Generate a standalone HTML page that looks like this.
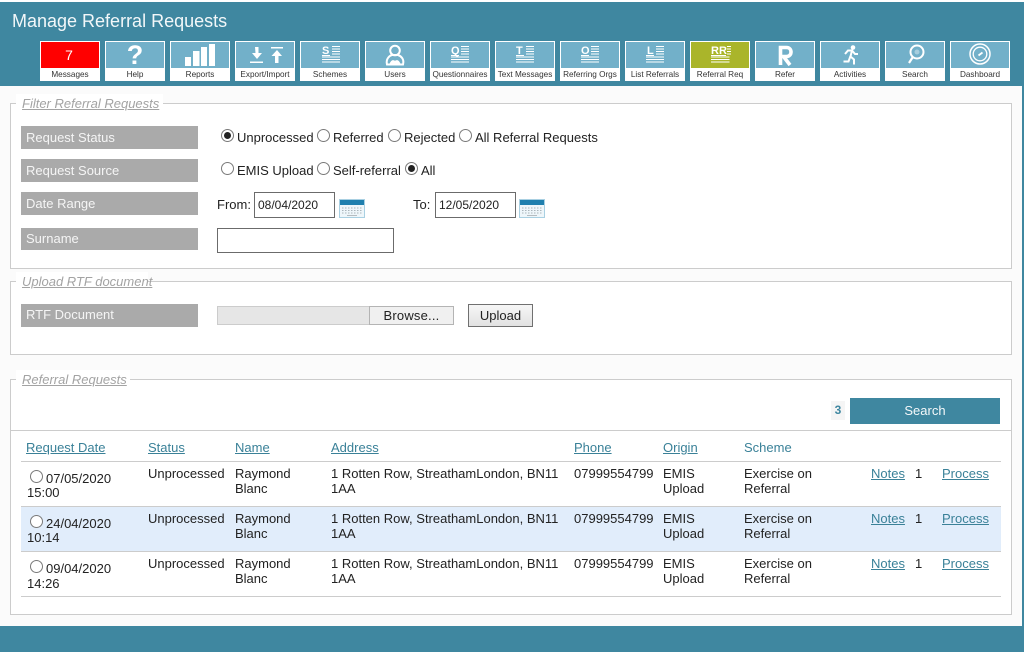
<!DOCTYPE html>
<html><head><meta charset="utf-8"><title>Manage Referral Requests</title>
<style>
html,body{margin:0;padding:0;width:1025px;height:652px;overflow:hidden;background:#fff}
body{position:relative;font-family:"Liberation Sans",Arial,sans-serif;font-size:13px;color:#222}
.a,.t,.l,.r,.lg,.tile,.tile b,.fs{position:absolute}
.t{white-space:nowrap;line-height:16px;height:16px}
.bg{position:absolute;left:0;top:2px;width:1024px;height:650px;background:#3f87a0}
.panel{position:absolute;left:0;top:86px;width:1022px;height:540px;background:#fbfbfb}
h1{position:absolute;left:12px;top:10px;margin:0;font-size:18px;font-weight:normal;line-height:22px;color:#f2f7f9}
.tile{top:41px;width:60px;height:40px;background:#fff}
.tile i{position:absolute;left:1px;top:1px;width:58px;height:26px;background:#72b0c9;display:block}
.tile b{left:-4px;width:68px;top:28px;text-align:center;font-weight:normal;font-size:8.2px;line-height:11px;color:#333}
.fs{left:10px;width:1000px;border:1px solid #ccc;background:#fff}
.lg{left:16px;background:#fff;height:20px;line-height:20px;font-style:italic;font-size:13px;color:#a3a3a3;white-space:nowrap}
.lg span{margin-left:6px;text-decoration:underline}
.l{left:21px;width:177px;background:#aaa;color:#f5f5f5;padding-left:5px;box-sizing:border-box;font-size:13px}
.r{width:11px;height:11px;border:1px solid #7a7a7a;border-radius:50%;background:#fff}
.r.on:after{content:"";position:absolute;left:2px;top:2px;width:7px;height:7px;border-radius:50%;background:#222}
.in{position:absolute;box-sizing:border-box;border:1px solid #6b6b6b;background:#fff;padding-left:3px;font-size:12px;color:#222}
.h{color:#3a8198;text-decoration:underline}
.ln{position:absolute;left:21px;width:980px;height:1px;background:#ccc}
</style></head><body>
<div class="bg"></div>
<h1>Manage Referral Requests</h1>

<div class="tile" style="left:40px"><i style="background:#f00"></i><b>Messages</b></div>
<div class="tile" style="left:105px"><i></i><b>Help</b></div>
<div class="tile" style="left:170px"><i></i><b>Reports</b></div>
<div class="tile" style="left:235px"><i></i><b>Export/Import</b></div>
<div class="tile" style="left:300px"><i></i><b>Schemes</b></div>
<div class="tile" style="left:365px"><i></i><b>Users</b></div>
<div class="tile" style="left:430px"><i></i><b>Questionnaires</b></div>
<div class="tile" style="left:495px"><i></i><b>Text Messages</b></div>
<div class="tile" style="left:560px"><i></i><b>Referring Orgs</b></div>
<div class="tile" style="left:625px"><i></i><b>List Referrals</b></div>
<div class="tile" style="left:690px"><i style="background:#aab52a"></i><b>Referral Req</b></div>
<div class="tile" style="left:755px"><i></i><b>Refer</b></div>
<div class="tile" style="left:820px"><i></i><b>Activities</b></div>
<div class="tile" style="left:885px"><i></i><b>Search</b></div>
<div class="tile" style="left:950px"><i></i><b>Dashboard</b></div>

<svg class="a" style="left:0;top:0;z-index:2" width="1025" height="86" viewBox="0 0 1025 86" fill="#fff" font-family="Liberation Sans,sans-serif">
<text x="69" y="60" font-size="14" text-anchor="middle">7</text>
<text x="135" y="64" font-size="27" font-weight="bold" text-anchor="middle">?</text>
<rect x="185" y="57" width="6" height="9"/><rect x="193" y="51" width="6.500" height="15"/><rect x="201" y="47" width="6" height="19"/><rect x="209" y="44" width="6" height="22"/>
<path d="M255 47h3.500v6h3.500l-5 6-5-6h3.500zM250 61.500h13v1.500h-13zM271 47h12v1.500h-12zM277 50l5 6h-3.500v7h-3.500v-7h-3.500z"/>
<text x="322" y="54" font-size="11" font-weight="bold">S</text><rect x="322" y="55" width="8" height="1"/><path d="M332 46.500h8M332 49h8M332 51.500h8M332 54h8M322 57h18M322 59.500h18M322 62h18" stroke="#fff" stroke-width="1" fill="none"/>
<circle cx="395" cy="50.500" r="4.800" fill="none" stroke="#fff" stroke-width="2"/>
<path d="M387 64.500c-1.500-6 3-9 5-9.500h6c3 1 6.500 4 5 9.500zM391 63c1-2 2-2.500 4-1 2-1.500 3-1 4 1z" fill="none" stroke="#fff" stroke-width="2"/>
<text x="451" y="54" font-size="11" font-weight="bold">Q</text><rect x="451" y="55" width="8" height="1"/><path d="M461 46.500h8M461 49h8M461 51.500h8M461 54h8M451 57h18M451 59.500h18M451 62h18" stroke="#fff" fill="none"/>
<text x="516" y="54" font-size="11" font-weight="bold">T</text><rect x="516" y="55" width="8" height="1"/><path d="M526 46.500h8M526 49h8M526 51.500h8M526 54h8M516 57h18M516 59.500h18M516 62h18" stroke="#fff" fill="none"/>
<text x="581" y="54" font-size="11" font-weight="bold">O</text><rect x="581" y="55" width="8" height="1"/><path d="M591 46.500h8M591 49h8M591 51.500h8M591 54h8M581 57h18M581 59.500h18M581 62h18" stroke="#fff" fill="none"/>
<text x="647" y="54" font-size="11" font-weight="bold">L</text><rect x="646" y="55" width="8" height="1"/><path d="M656 46.500h8M656 49h8M656 51.500h8M656 54h8M646 57h18M646 59.500h18M646 62h18" stroke="#fff" fill="none"/>
<text x="711" y="54" font-size="11" font-weight="bold">RR</text><rect x="711" y="55" width="15" height="1"/><path d="M727 46.500h4M727 49h4M727 51.500h4M727 54h4M711 57h18.500M711 59.500h18.500M711 62h18.500" stroke="#fff" fill="none"/>
<path d="M780.500 65V47.500h6c6 0 6 9 0 9h-3l6.500 8.500" fill="none" stroke="#fff" stroke-width="3.600"/>
<circle cx="853" cy="47.500" r="2.300"/>
<path d="M845 54l3-3.500h4l-1.500 6 3.500 3 0 5M850.500 56l-2 5.500h-5M852.500 51l2.500 3h3" fill="none" stroke="#fff" stroke-width="2"/>
<circle cx="917" cy="52" r="6.500" fill="none" stroke="#fff" stroke-width="2"/><circle cx="917" cy="52" r="2.500" fill="#a6cede"/>
<path d="M912.500 57.500l-3.500 5.500" fill="none" stroke="#fff" stroke-width="2.200"/>
<circle cx="980" cy="54" r="10" fill="none" stroke="#fff" stroke-width="1.500"/><circle cx="980" cy="54" r="6.800" fill="none" stroke="#fff" stroke-width="1.300"/>
<path d="M978.500 55.500l4-3" fill="none" stroke="#fff" stroke-width="1.800"/>
</svg>

<div class="panel"></div>

<div class="fs" style="top:103px;height:164px"></div>
<div class="lg" style="top:94px;width:147px"><span>Filter Referral Requests</span></div>
<div class="l" style="top:126px;height:23px;line-height:23px">Request Status</div>
<div class="l" style="top:159px;height:23px;line-height:23px">Request Source</div>
<div class="l" style="top:192px;height:23px;line-height:23px">Date Range</div>
<div class="l" style="top:228px;height:22px;line-height:21px">Surname</div>

<div class="r on" style="left:221px;top:129px"></div><div class="t" style="left:237px;top:130px">Unprocessed</div>
<div class="r" style="left:317px;top:129px"></div><div class="t" style="left:333px;top:130px">Referred</div>
<div class="r" style="left:388px;top:129px"></div><div class="t" style="left:404px;top:130px">Rejected</div>
<div class="r" style="left:459px;top:129px"></div><div class="t" style="left:475px;top:130px">All Referral Requests</div>

<div class="r" style="left:221px;top:162px"></div><div class="t" style="left:237px;top:163px">EMIS Upload</div>
<div class="r" style="left:317px;top:162px"></div><div class="t" style="left:333px;top:163px">Self-referral</div>
<div class="r on" style="left:405px;top:162px"></div><div class="t" style="left:421px;top:163px">All</div>

<div class="t" style="left:217px;top:197px">From:</div>
<div class="in" style="left:254px;top:192px;width:81px;height:26px;line-height:24px">08/04/2020</div>
<div class="t" style="left:413px;top:197px">To:</div>
<div class="in" style="left:435px;top:192px;width:81px;height:26px;line-height:24px">12/05/2020</div>
<svg class="a" style="left:339px;top:199px" width="26" height="19" viewBox="0 0 26 19"><rect x=".5" y=".5" width="25" height="18" fill="#eef6fa" stroke="#a9d0e2"/><rect x="1" y="1" width="24" height="5" fill="#1f7fae"/><path d="M3 9h20M3 11.500h20M3 14h20" stroke="#aab4ba" stroke-dasharray="1.500 1.500"/><path d="M8 16.500h10" stroke="#b5bcc0"/></svg>
<svg class="a" style="left:519px;top:199px" width="26" height="19" viewBox="0 0 26 19"><rect x=".5" y=".5" width="25" height="18" fill="#eef6fa" stroke="#a9d0e2"/><rect x="1" y="1" width="24" height="5" fill="#1f7fae"/><path d="M3 9h20M3 11.500h20M3 14h20" stroke="#aab4ba" stroke-dasharray="1.500 1.500"/><path d="M8 16.500h10" stroke="#b5bcc0"/></svg>
<div class="in" style="left:217px;top:228px;width:177px;height:25px"></div>

<div class="fs" style="top:281px;height:72px"></div>
<div class="lg" style="top:272px;width:132px"><span>Upload RTF document</span></div>
<div class="l" style="top:304px;height:23px;line-height:21px">RTF Document</div>
<div class="a" style="left:217px;top:306px;width:152px;height:17px;background:#e6e6e6;border:1px solid #ccc;border-right:0"></div>
<div class="a" style="left:369px;top:306px;width:83px;height:17px;background:#f0f0f0;border:1px solid #b4b4b4;text-align:center;line-height:17px;letter-spacing:.2px">Browse...</div>
<div class="a" style="left:468px;top:304px;width:63px;height:21px;background:linear-gradient(#f6f6f6,#e2e2e2);border:1px solid #707070;text-align:center;line-height:22px">Upload</div>

<div class="fs" style="top:379px;height:234px"></div>
<div class="lg" style="top:370px;width:114px"><span>Referral Requests</span></div>
<div class="a" style="left:831px;top:401px;width:14px;height:19px;background:#f5f5f5;color:#3f87a0;font-weight:bold;font-size:12px;line-height:19px;text-align:center">3</div>
<div class="a" style="left:850px;top:398px;width:150px;height:26px;background:#3f87a0;color:#f4f8fa;text-align:center;line-height:25px">Search</div>
<div class="a" style="left:11px;top:430px;width:1000px;height:1px;background:#ccc"></div>

<div class="t h" style="left:26px;top:440px">Request Date</div>
<div class="t h" style="left:148px;top:440px">Status</div>
<div class="t h" style="left:235px;top:440px">Name</div>
<div class="t h" style="left:331px;top:440px">Address</div>
<div class="t h" style="left:574px;top:440px">Phone</div>
<div class="t h" style="left:663px;top:440px">Origin</div>
<div class="t" style="left:744px;top:440px;color:#3a8198">Scheme</div>

<div class="a" style="left:21px;top:507px;width:980px;height:44px;background:#e1edfb"></div>
<div class="ln" style="top:461px"></div>
<div class="ln" style="top:506px"></div>
<div class="ln" style="top:551px"></div>
<div class="ln" style="top:596px"></div>

<div class="r" style="left:30px;top:470px"></div>
<div class="t" style="left:46px;top:471px">07/05/2020</div><div class="t" style="left:27px;top:485px">15:00</div>
<div class="t" style="left:148px;top:466px">Unprocessed</div>
<div class="t" style="left:235px;top:466px">Raymond</div><div class="t" style="left:235px;top:481px">Blanc</div>
<div class="t" style="left:331px;top:466px">1 Rotten Row, StreathamLondon, BN11</div><div class="t" style="left:331px;top:481px">1AA</div>
<div class="t" style="left:574px;top:466px">07999554799</div>
<div class="t" style="left:663px;top:466px">EMIS</div><div class="t" style="left:663px;top:481px">Upload</div>
<div class="t" style="left:744px;top:466px">Exercise on</div><div class="t" style="left:744px;top:481px">Referral</div>
<div class="t h" style="left:871px;top:466px">Notes</div><div class="t" style="left:915px;top:466px">1</div><div class="t h" style="left:942px;top:466px">Process</div>

<div class="r" style="left:30px;top:515px"></div>
<div class="t" style="left:46px;top:516px">24/04/2020</div><div class="t" style="left:27px;top:530px">10:14</div>
<div class="t" style="left:148px;top:511px">Unprocessed</div>
<div class="t" style="left:235px;top:511px">Raymond</div><div class="t" style="left:235px;top:526px">Blanc</div>
<div class="t" style="left:331px;top:511px">1 Rotten Row, StreathamLondon, BN11</div><div class="t" style="left:331px;top:526px">1AA</div>
<div class="t" style="left:574px;top:511px">07999554799</div>
<div class="t" style="left:663px;top:511px">EMIS</div><div class="t" style="left:663px;top:526px">Upload</div>
<div class="t" style="left:744px;top:511px">Exercise on</div><div class="t" style="left:744px;top:526px">Referral</div>
<div class="t h" style="left:871px;top:511px">Notes</div><div class="t" style="left:915px;top:511px">1</div><div class="t h" style="left:942px;top:511px">Process</div>

<div class="r" style="left:30px;top:560px"></div>
<div class="t" style="left:46px;top:561px">09/04/2020</div><div class="t" style="left:27px;top:576px">14:26</div>
<div class="t" style="left:148px;top:556px">Unprocessed</div>
<div class="t" style="left:235px;top:556px">Raymond</div><div class="t" style="left:235px;top:571px">Blanc</div>
<div class="t" style="left:331px;top:556px">1 Rotten Row, StreathamLondon, BN11</div><div class="t" style="left:331px;top:571px">1AA</div>
<div class="t" style="left:574px;top:556px">07999554799</div>
<div class="t" style="left:663px;top:556px">EMIS</div><div class="t" style="left:663px;top:571px">Upload</div>
<div class="t" style="left:744px;top:556px">Exercise on</div><div class="t" style="left:744px;top:571px">Referral</div>
<div class="t h" style="left:871px;top:556px">Notes</div><div class="t" style="left:915px;top:556px">1</div><div class="t h" style="left:942px;top:556px">Process</div>
</body></html>
